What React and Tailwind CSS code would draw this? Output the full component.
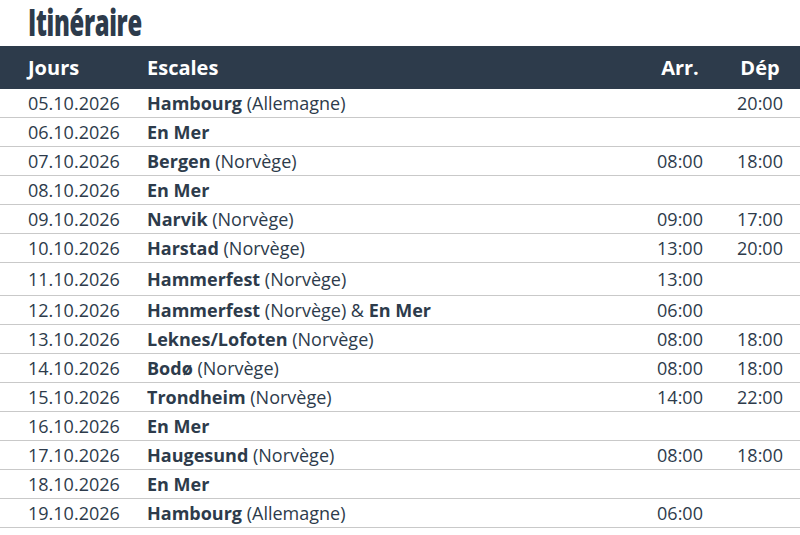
const ROWS = [
  { d: '05.10.2026', name: 'Hambourg', land: 'Allemagne', arr: '', dep: '20:00' },
  { d: '06.10.2026', name: 'En Mer' },
  { d: '07.10.2026', name: 'Bergen', land: 'Norvège', arr: '08:00', dep: '18:00' },
  { d: '08.10.2026', name: 'En Mer' },
  { d: '09.10.2026', name: 'Narvik', land: 'Norvège', arr: '09:00', dep: '17:00' },
  { d: '10.10.2026', name: 'Harstad', land: 'Norvège', arr: '13:00', dep: '20:00' },
  { d: '11.10.2026', name: 'Hammerfest', land: 'Norvège', arr: '13:00', dep: '', tall: true },
  { d: '12.10.2026', name: 'Hammerfest', land: 'Norvège', extra: 'En Mer', arr: '06:00', dep: '' },
  { d: '13.10.2026', name: 'Leknes/Lofoten', land: 'Norvège', arr: '08:00', dep: '18:00' },
  { d: '14.10.2026', name: 'Bodø', land: 'Norvège', arr: '08:00', dep: '18:00' },
  { d: '15.10.2026', name: 'Trondheim', land: 'Norvège', arr: '14:00', dep: '22:00' },
  { d: '16.10.2026', name: 'En Mer' },
  { d: '17.10.2026', name: 'Haugesund', land: 'Norvège', arr: '08:00', dep: '18:00' },
  { d: '18.10.2026', name: 'En Mer' },
  { d: '19.10.2026', name: 'Hambourg', land: 'Allemagne', arr: '06:00', dep: '' },
]

export default function App() {
  return (
    <div className="w-[800px] h-[535px] bg-white text-[#2d3b4b]" style={{ fontFamily: '"Open Sans", sans-serif' }}>
      <div className="h-[46px] pl-7">
        {/* condensed title */}
        <h1 className="w-fit origin-left scale-x-[0.66] scale-y-[1.04] text-[36px] leading-[44px] font-extrabold tracking-[-0.5px]">
          Itinéraire
        </h1>
      </div>

      {/* Header */}
      <div className="grid grid-cols-[147px_1fr_80px_80px] h-[43px] items-center bg-[#2d3b4b] text-white text-[20px] font-bold">
        <div className="pl-7">Jours</div>
        <div>Escales</div>
        <div className="text-center">Arr.</div>
        <div className="text-center">Dép</div>
      </div>

      {/* Rows */}
      {ROWS.map(r => (
        <div key={r.d}
          className={`grid grid-cols-[147px_1fr_80px_80px] items-center border-b border-[#c9c9c9] text-[18px] ${r.tall ? 'h-[33px]' : 'h-[29px]'}`}>
          <div className="pl-7">{r.d}</div>
          <div className="whitespace-nowrap">
            <span className="font-bold">{r.name}</span>
            {r.land && <> ({r.land})</>}
            {r.extra && <> &amp; <span className="font-bold">{r.extra}</span></>}
          </div>
          <div className="text-center">{r.arr}</div>
          <div className="text-center">{r.dep}</div>
        </div>
      ))}
    </div>
  )
}
